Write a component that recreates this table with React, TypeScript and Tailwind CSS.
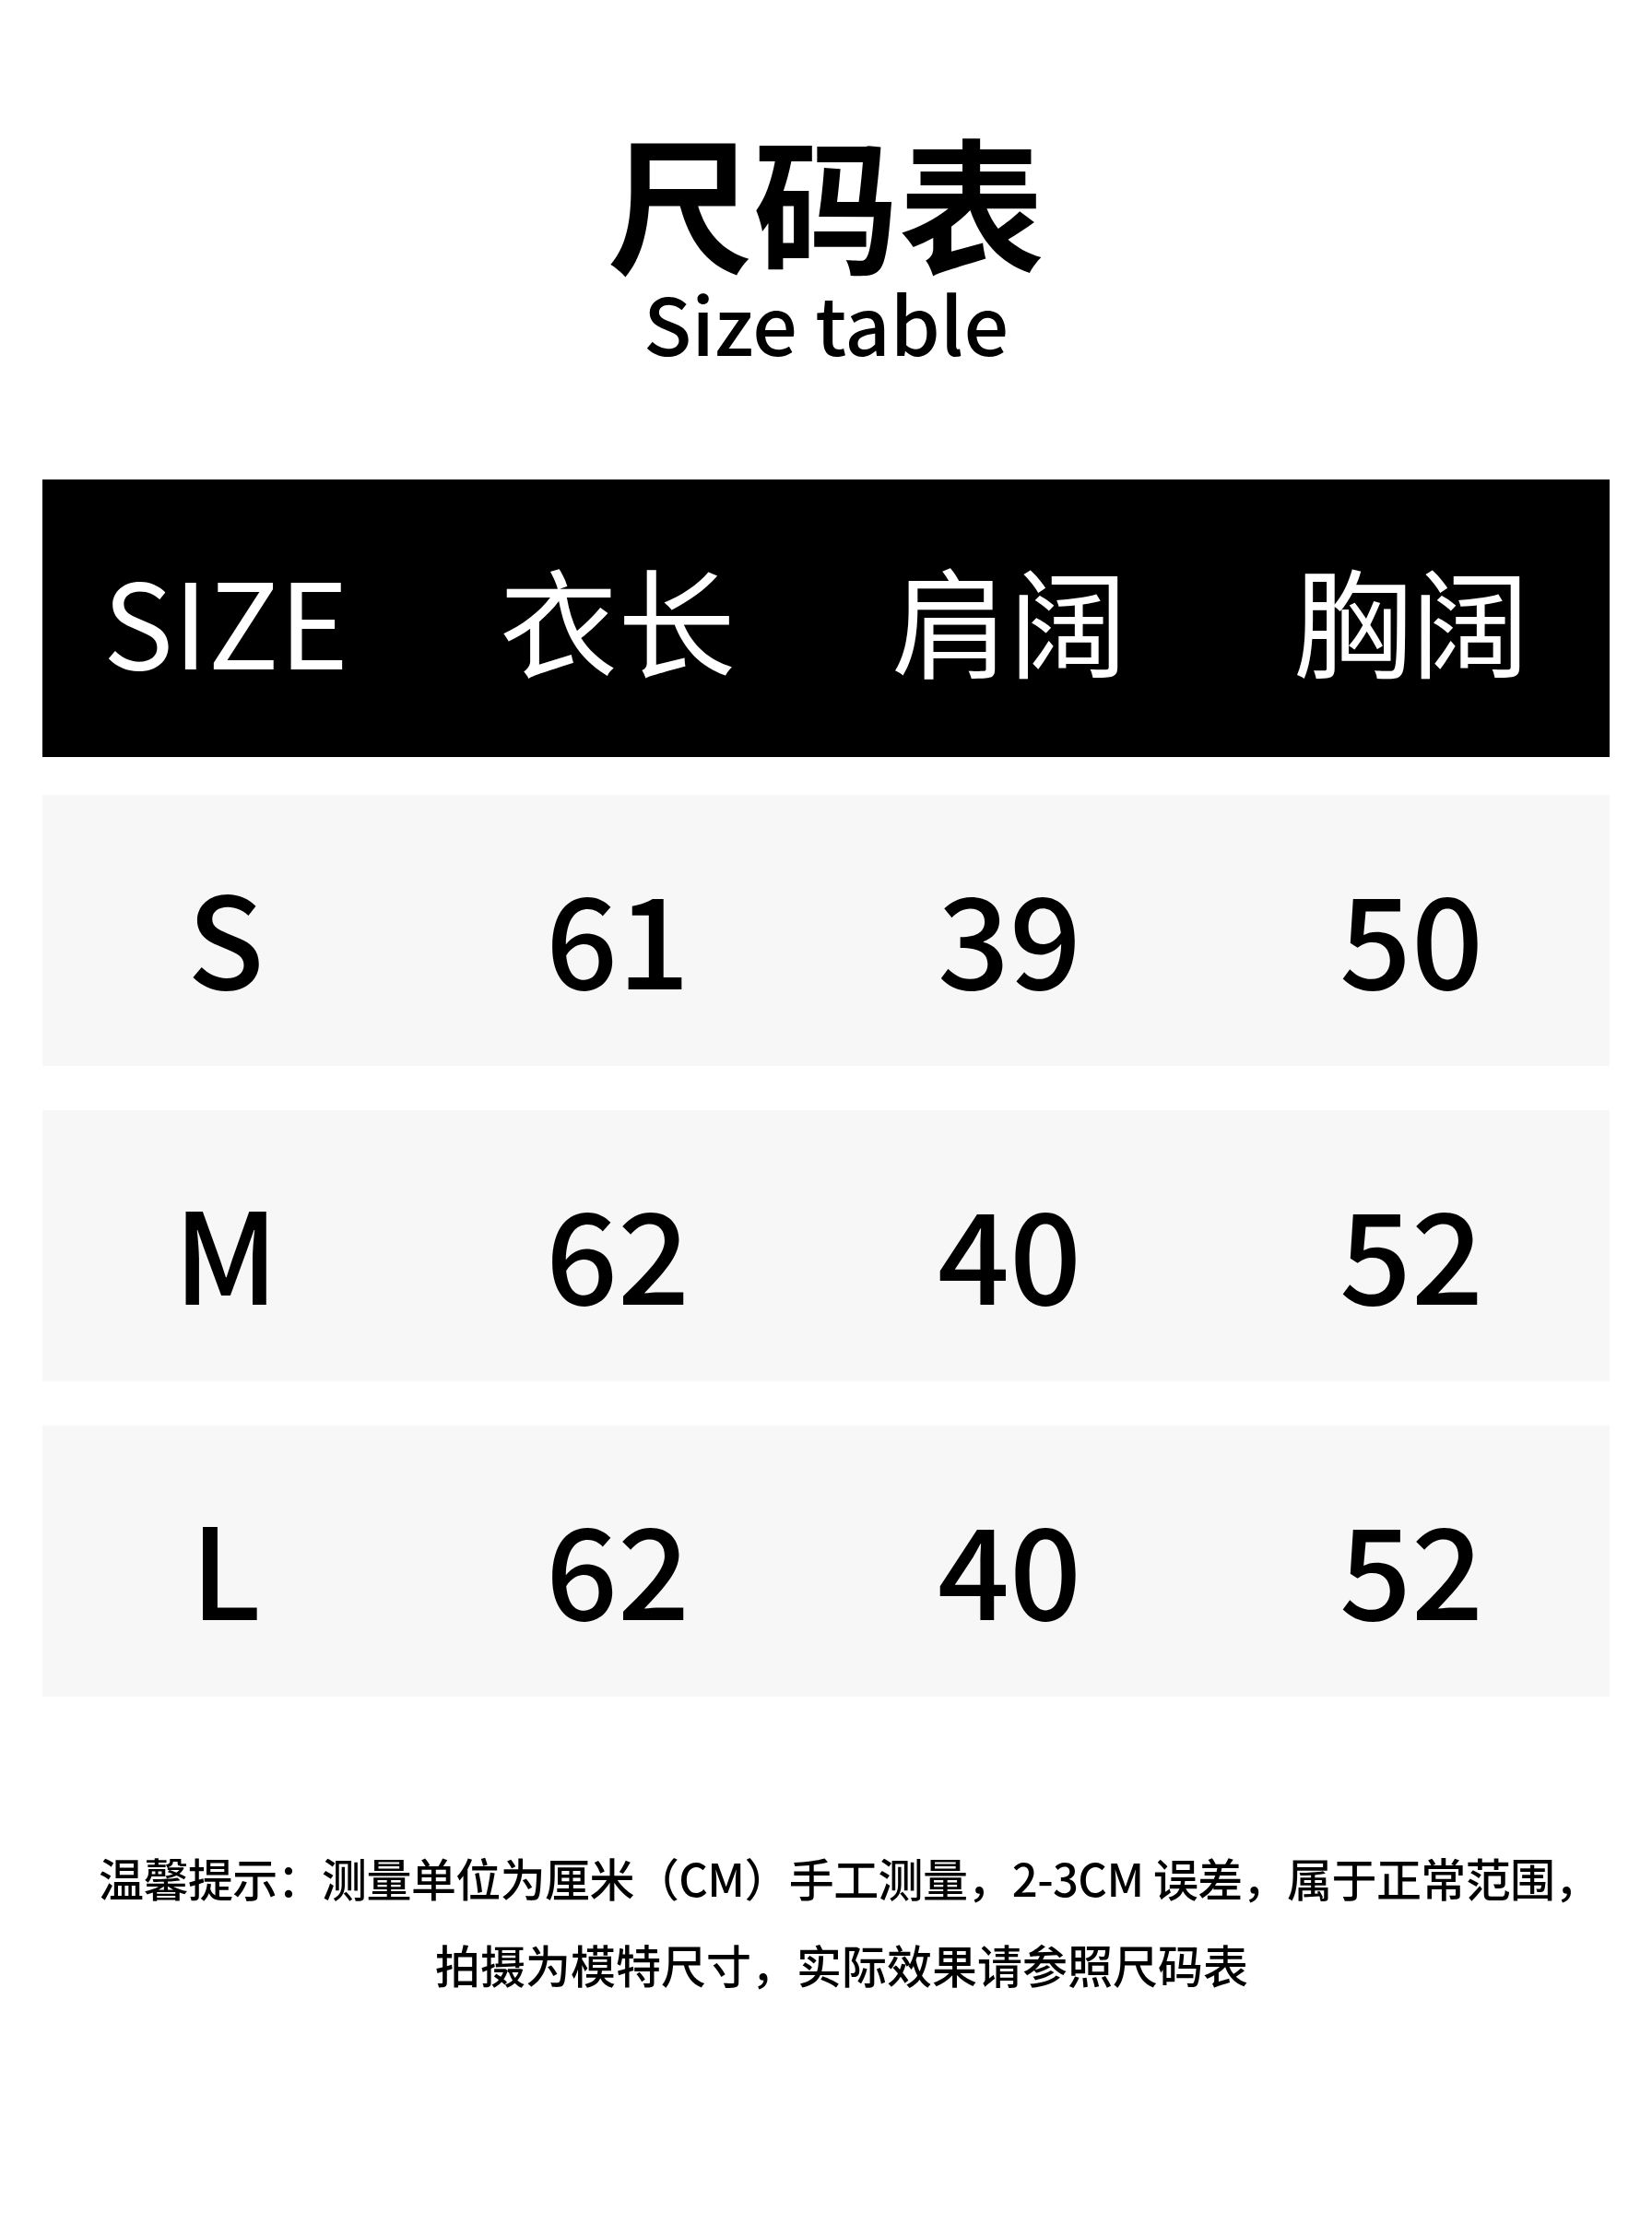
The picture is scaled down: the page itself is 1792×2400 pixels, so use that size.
const font = { fontFamily: '"Noto Sans CJK SC", "Noto Sans", sans-serif' };

type Row = { size: string; length: string; shoulder: string; chest: string };

const rows: Row[] = [
    { size: "S", length: "61", shoulder: "39", chest: "50" },
    { size: "M", length: "62", shoulder: "40", chest: "52" },
    { size: "L", length: "62", shoulder: "40", chest: "52" },
];

const cols = "grid grid-cols-[398px_452px_398px_1fr] items-center";

const App = () => {
    return (
        <div
            className="w-[1792px] h-[2400px] bg-white text-black flex flex-col items-center font-['Noto_Sans_CJK_SC',sans-serif]"
            style={font}
        >
            <h1 className="mt-[138px] text-[158px] font-bold leading-none">
                尺码表
            </h1>
            <p className="mt-[10px] text-[86px] font-medium leading-none">Size table</p>

            <div className="mt-[128px] w-[1700px] flex flex-col gap-[48px]">
                <div className={`${cols} h-[301px] bg-black text-white text-[128px] font-normal leading-none mb-[-7px]`}>
                    <div className="text-center">SIZE</div>
                    <div className="text-center">衣长</div>
                    <div className="text-center">肩阔</div>
                    <div className="text-center pl-[22px]">胸阔</div>
                </div>

                {rows.map((r) => (
                    <div
                        key={r.size}
                        className={`${cols} h-[294px] bg-[#f7f7f7] text-[137px] font-medium leading-none pt-[8px]`}
                    >
                        <div className="text-center">{r.size}</div>
                        <div className="text-center">{r.length}</div>
                        <div className="text-center">{r.shoulder}</div>
                        <div className="text-center pl-[22px]">{r.chest}</div>
                    </div>
                ))}
            </div>

            <div className="mt-[170px] pl-[34px] flex flex-col items-center gap-[42px] text-[49px] font-medium leading-[52px]">
                <p className="pl-[16px] tracking-[-0.6px]">温馨提示：测量单位为厘米（CM）手工测量，2-3CM 误差，属于正常范围，</p>
                <p>拍摄为模特尺寸，实际效果请参照尺码表</p>
            </div>
        </div>
    );
};

export default App;
